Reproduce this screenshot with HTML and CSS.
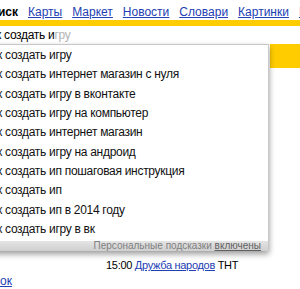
FILE: index.html
```html
<!DOCTYPE html>
<html lang="ru">
<head>
<meta charset="utf-8">
<title>Яндекс</title>
<link rel="stylesheet" href="styles.css">
</head>
<body>
<div class="page">
  <nav class="nav">
    <b class="cur">Поиск</b>
    <a href="#">Карты</a>
    <a href="#">Маркет</a>
    <a href="#">Новости</a>
    <a href="#">Словари</a>
    <a href="#">Картинки</a>
    <a href="#">Видео</a>
  </nav>
  <div class="frame"></div>
  <div class="search">
    <div class="input"><span class="typed">Как создать и</span><span class="hint">гру</span></div>
    <div class="suggest">
      <ul class="list">
        <li>Как создать игру</li>
        <li>Как создать интернет магазин с нуля</li>
        <li>Как создать игру в вконтакте</li>
        <li>Как создать игру на компьютер</li>
        <li>Как создать интернет магазин</li>
        <li>Как создать игру на андроид</li>
        <li>Как создать ип пошаговая инструкция</li>
        <li>Как создать ип</li>
        <li>Как создать ип в 2014 году</li>
        <li>Как создать игру в вк</li>
      </ul>
      <div class="foot">Персональные подсказки <a href="#">включены</a></div>
    </div>
  </div>
  <div class="btnrow"><div class="btn"></div></div>
  <div class="tv"><span class="time">15:00</span> <a href="#">Дружба народов</a> ТНТ</div>
  <div class="more"><a href="#">ок</a></div>
</div>
</body>
</html>
```
FILE: styles.css
```css
html, body {
  margin: 0;
  padding: 0;
  background: #fff;
  overflow: hidden;
}
.page {
  font-family: Arial, "Liberation Sans", sans-serif;
  color: #000;
  width: 300px;
  height: 289px;
  overflow: hidden;
}
a {
  color: #2240b4;
  text-decoration: underline;
}
.nav {
  display: flex;
  gap: 10px;
  height: 16px;
  padding-top: 4px;
  line-height: 16px;
  font-size: 12px;
  white-space: nowrap;
  margin-left: -18px;
}
.cur {
  font-weight: bold;
}
.frame {
  height: 6px;
  background: #ffcc00;
}
.search {
  position: relative;
  height: 18px;
}
.input {
  margin-left: -17px;
  font-size: 12px;
  letter-spacing: -0.3px;
  line-height: 18px;
  white-space: nowrap;
}
.hint {
  color: #b4b4b4;
}
.suggest {
  position: absolute;
  top: 18px;
  left: -40px;
  width: 307px;
  background: #fff;
  border: 1px solid #c8c8c8;
  border-bottom: 0;
  box-shadow: 0 3px 6px rgba(0, 0, 0, 0.4);
  z-index: 2;
}
.list {
  list-style: none;
  margin: 0;
  padding: 1px 0 0 23px;
  font-size: 12px;
  letter-spacing: -0.3px;
  line-height: 19.33px;
  white-space: nowrap;
  color: #111;
}
.foot {
  margin-top: 2px;
  height: 10px;
  line-height: 10px;
  font-size: 10px;
  text-align: right;
  padding-right: 7px;
  color: #808080;
  background: linear-gradient(#e4e4e4, #cfcfcf);
}
.foot a {
  color: #606060;
}
.btnrow {
  display: flex;
  justify-content: flex-end;
}
.btn {
  width: 30px;
  height: 24px;
  background: #ffcc00;
}
.tv {
  margin-top: 189px;
  padding-left: 106px;
  font-size: 11px;
  letter-spacing: -0.3px;
  line-height: 16px;
  white-space: nowrap;
}
.more {
  font-size: 12px;
  line-height: 16px;
}
```
